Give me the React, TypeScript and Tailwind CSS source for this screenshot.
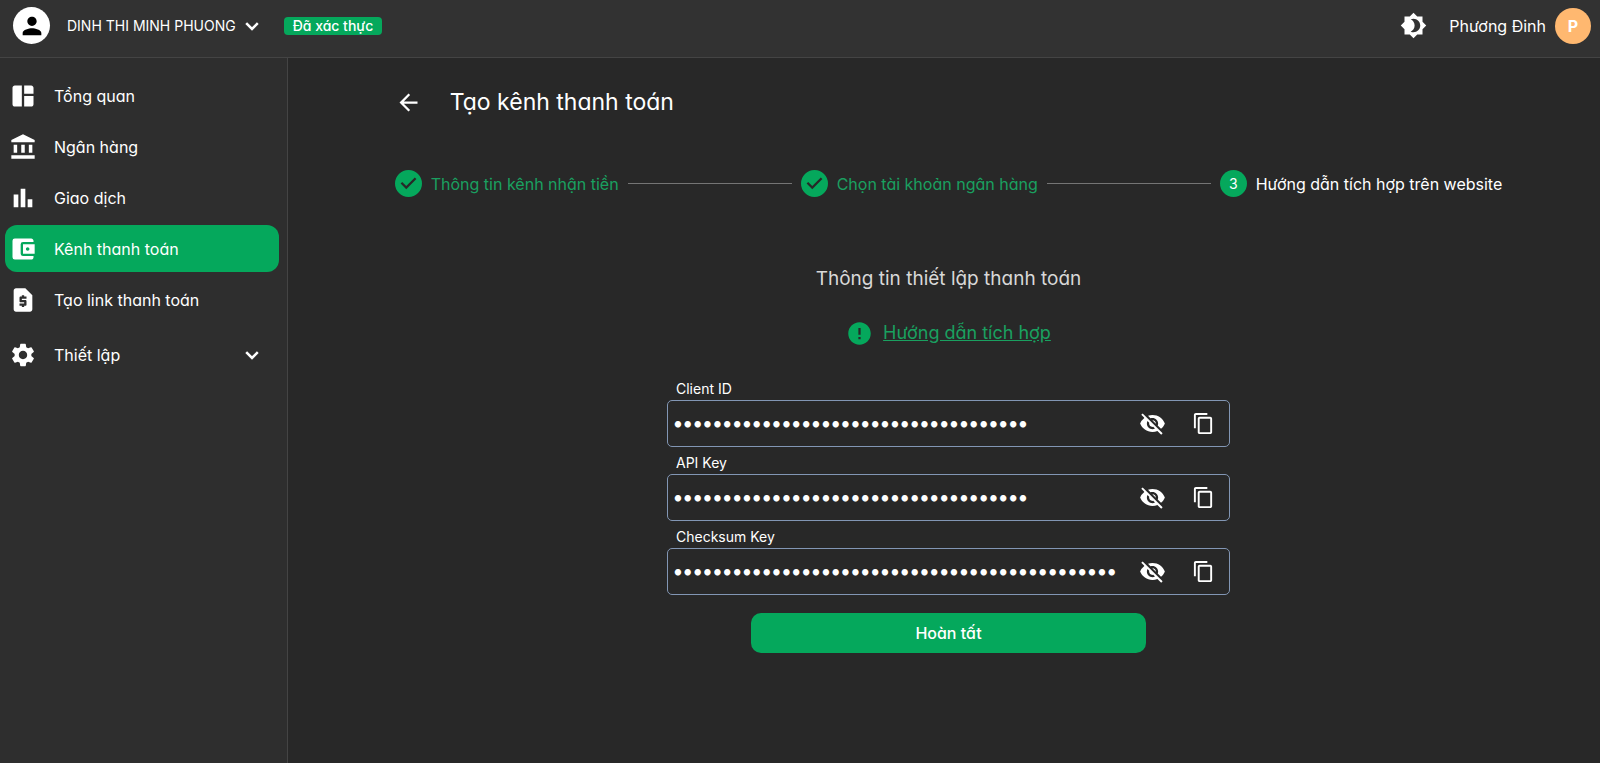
import type { ReactNode } from "react";
import { Fragment } from "react";
import type { IconType } from "react-icons";
import {
  MdAccountBalance,
  MdAccountBalanceWallet,
  MdArrowBack,
  MdBrightness4,
  MdContentCopy,
  MdError,
  MdPerson,
  MdRequestPage,
  MdSettings,
  MdSpaceDashboard,
  MdVisibilityOff,
} from "react-icons/md";

function BarsIcon({ className }: { className?: string }) {
  return (
    <svg viewBox="0 0 24 24" fill="currentColor" className={className} aria-hidden="true">
      <path d="M4 9h4v11H4zM16 13h4v7h-4zM10 4h4v16h-4z" />
    </svg>
  );
}

function ChevronIcon({ className }: { className?: string }) {
  return (
    <svg viewBox="0 0 24 24" fill="none" stroke="currentColor" strokeWidth="2.5" className={className} aria-hidden="true">
      <path d="M6.2 9.2 12 15l5.800-5.800" />
    </svg>
  );
}

function StepDoneIcon({ className }: { className?: string }) {
  return (
    <svg viewBox="0 0 24 24" fill="currentColor" className={className} aria-hidden="true">
      <path d="M12 0a12 12 0 1 0 0 24 12 12 0 0 0 0-24zm-2 17l-5-5 1.4-1.4 3.6 3.6 7.6-7.6L19 8l-9 9z" />
    </svg>
  );
}

type NavItem = {
  label: string;
  icon: IconType | typeof BarsIcon;
  active?: boolean;
};

const NAV: NavItem[] = [
  { label: "Tổng quan", icon: MdSpaceDashboard },
  { label: "Ngân hàng", icon: MdAccountBalance },
  { label: "Giao dịch", icon: BarsIcon },
  { label: "Kênh thanh toán", icon: MdAccountBalanceWallet, active: true },
  { label: "Tạo link thanh toán", icon: MdRequestPage },
];

const STEPS = [
  { label: "Thông tin kênh nhận tiền", done: true },
  { label: "Chọn tài khoản ngân hàng", done: true },
  { label: "Hướng dẫn tích hợp trên website", done: false },
];

const FIELDS = [
  { id: "client-id", label: "Client ID", length: 36 },
  { id: "api-key", label: "API Key", length: 36 },
  { id: "checksum-key", label: "Checksum Key", length: 45 },
];

function Header() {
  return (
    <header className="flex h-[58px] items-center border-b border-[#444444] bg-[#323232] pr-[9px] pb-1.5 pl-[13px]">
      <span className="flex size-[37px] items-center justify-center rounded-full bg-white text-black">
        <MdPerson className="size-7" />
      </span>
      <button type="button" className="ml-[17px] flex items-center gap-1 text-sm">
        DINH THI MINH PHUONG
        <ChevronIcon className="size-6" />
      </button>
      <span className="ml-5 rounded-sm bg-[#05a85c] px-[9px] text-sm leading-[18px] font-medium">Đã xác thực</span>
      <button type="button" aria-label="Đổi giao diện" className="ml-auto">
        <MdBrightness4 className="size-[27px]" />
      </button>
      <button type="button" className="ml-[22px] flex items-center gap-[9px] text-base">
        Phương Đinh
        <span className="flex size-9 items-center justify-center rounded-full bg-[#ffb870] text-base font-bold">P</span>
      </button>
    </header>
  );
}

function NavLink({ item, children }: { item: NavItem; children?: ReactNode }) {
  const Icon = item.icon;
  return (
    <a
      href="#"
      className={
        "flex h-[47px] items-center rounded-xl pr-3 pl-1 text-base " + (item.active ? "bg-[#05a85c]" : "")
      }
    >
      <Icon className="size-7" />
      <span className="ml-[17px]">{item.label}</span>
      {children}
    </a>
  );
}

function Sidebar() {
  return (
    <nav className="flex w-72 shrink-0 flex-col gap-1 border-r border-[#444444] bg-[#2e2e2e] pt-3.5 pr-2 pl-[5px]">
      {NAV.map((item) => (
        <NavLink key={item.label} item={item} />
      ))}
      <div className="mt-1">
        <NavLink item={{ label: "Thiết lập", icon: MdSettings }}>
          <ChevronIcon className="mr-[3px] ml-auto size-6" />
        </NavLink>
      </div>
    </nav>
  );
}

function Stepper() {
  return (
    <ol className="flex items-center gap-[9px]">
      {STEPS.map((step, i) => (
        <Fragment key={step.label}>
          {i > 0 && <li aria-hidden="true" className="h-px flex-1 bg-[#757575]" />}
          <li
            className={
              "flex items-center gap-[9px] text-base whitespace-nowrap " + (step.done ? "text-[#1aa060]" : "text-white")
            }
          >
            {step.done ? (
              <StepDoneIcon className="size-[27px] text-[#05a85c]" />
            ) : (
              <span className="flex size-[27px] items-center justify-center rounded-full bg-[#05a85c] text-sm">
                {i + 1}
              </span>
            )}
            {step.label}
          </li>
        </Fragment>
      ))}
    </ol>
  );
}

function SecretField({ id, label, length }: { id: string; label: string; length: number }) {
  return (
    <div>
      <label htmlFor={id} className="block pt-[5px] pl-[9px] text-sm leading-[22px]">
        {label}
      </label>
      <div className="flex h-[47px] items-center rounded-[5px] border border-[#8296b4] pr-3.5 pl-[5px]">
        <input
          id={id}
          type="password"
          readOnly
          value={"x".repeat(length)}
          className="min-w-0 flex-1 bg-transparent font-['Lato',sans-serif] text-[17px] outline-none"
        />
        <button type="button" aria-label={"Hiện " + label} className="ml-2">
          <MdVisibilityOff className="size-[27px]" />
        </button>
        <button type="button" aria-label={"Sao chép " + label} className="ml-[26px]">
          <MdContentCopy className="size-[23px]" />
        </button>
      </div>
    </div>
  );
}

export default function App() {
  return (
    <div className="flex min-h-screen flex-col bg-[#282828] font-['Inter',sans-serif] text-white [font-feature-settings:'cv11']">
      <Header />
      <div className="flex flex-1">
        <Sidebar />
        <main className="min-w-0 flex-1 pl-[9px]">
          <div className="mx-auto w-[85%] pt-6">
            <div className="flex items-center gap-7">
              <button type="button" aria-label="Quay lại">
                <MdArrowBack className="size-[27px]" />
              </button>
              <h1 className="text-[23px] leading-10">Tạo kênh thanh toán</h1>
            </div>
            <div className="mt-12">
              <Stepper />
            </div>
            <div className="mx-auto mt-[68px] flex max-w-[563px] flex-col">
              <h2 className="text-center text-[19px] leading-7 text-[#d8d8d8]">Thông tin thiết lập thanh toán</h2>
              <div className="mt-6 mb-6 flex items-center justify-center gap-2.5">
                <MdError className="size-[27px] text-[#05a85c]" />
                <a href="#" className="text-lg leading-8 text-[#1aa060] underline">
                  Hướng dẫn tích hợp
                </a>
              </div>
              {FIELDS.map((field) => (
                <SecretField key={field.id} {...field} />
              ))}
              <button
                type="button"
                className="mx-auto mt-[18px] h-10 w-[70%] rounded-[10px] bg-[#05a85c] text-base font-medium"
              >
                Hoàn tất
              </button>
            </div>
          </div>
        </main>
      </div>
    </div>
  );
}
